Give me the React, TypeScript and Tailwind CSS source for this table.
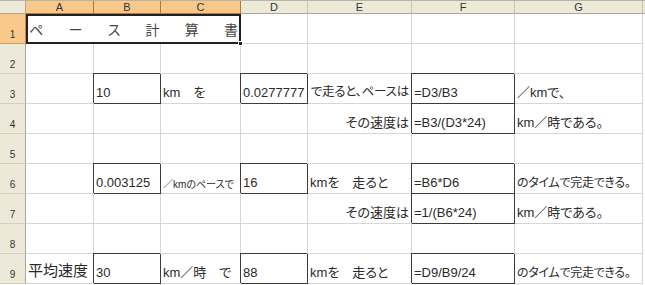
import React, { ReactElement } from "react";

interface CellData {
  text?: string;
  boxed?: boolean;
  align?: "left" | "right";
  size?: string;
}

const columns = ["A", "B", "C", "D", "E", "F", "G"];
const selectedColumns = ["A", "B", "C"];

const font =
  "font-['Liberation_Sans','Noto_Sans_CJK_JP',sans-serif] [font-feature-settings:'palt']";

// row number -> cells A..G
const sheet: Record<number, (CellData | null)[]> = {
  2: [null, null, null, null, null, null, null],
  3: [
    null,
    { text: "10", boxed: true },
    { text: "km　を" },
    { text: "0.0277777", boxed: true },
    { text: "で走ると、ペースは", align: "right", size: "text-[12.5px] tracking-[-0.2px]" },
    { text: "=D3/B3", boxed: true },
    { text: "／kmで、" },
  ],
  4: [
    null,
    null,
    null,
    null,
    { text: "その速度は", align: "right" },
    { text: "=B3/(D3*24)", boxed: true },
    { text: "km／時である。" },
  ],
  5: [null, null, null, null, null, null, null],
  6: [
    null,
    { text: "0.003125", boxed: true },
    { text: "／kmのペースで", size: "text-[10px]" },
    { text: "16", boxed: true },
    { text: "kmを　走ると" },
    { text: "=B6*D6", boxed: true },
    { text: "のタイムで完走できる。", size: "text-[12px] tracking-[-0.3px]" },
  ],
  7: [
    null,
    null,
    null,
    null,
    { text: "その速度は", align: "right" },
    { text: "=1/(B6*24)", boxed: true },
    { text: "km／時である。" },
  ],
  8: [null, null, null, null, null, null, null],
  9: [
    { text: "平均速度", size: "text-[15px]" },
    { text: "30", boxed: true },
    { text: "km／時　で" },
    { text: "88", boxed: true },
    { text: "kmを　走ると" },
    { text: "=D9/B9/24", boxed: true },
    { text: "のタイムで完走できる。", size: "text-[12px] tracking-[-0.3px]" },
  ],
};

function Cell({ cell }: { cell: CellData | null }): ReactElement {
  const boxed = cell?.boxed;
  return (
    <div
      className={`flex items-end overflow-hidden whitespace-nowrap px-[2px] pb-[1px] text-[#2a2a2a] ${
        cell?.align === "right" ? "justify-end" : "justify-start"
      } ${cell?.size ?? "text-[13px]"} ${
        boxed
          ? "border-r border-b border-[#3c3c3c] shadow-[-1px_-1px_0_#3c3c3c]"
          : "border-r border-b border-[#d6d6d6]"
      }`}
    >
      {cell?.text}
    </div>
  );
}

function RowHeader({ n, active }: { n: number; active?: boolean }): ReactElement {
  return (
    <div
      className={`flex items-end justify-center pb-[1px] text-[10px] text-[#333] border-r border-b ${
        active
          ? "bg-[#f9c98c] border-r-[#c48a44] border-b-[#d8a060]"
          : "bg-[#ece9d8] border-r-[#aca899] border-b-[#d4d0c0]"
      }`}
    >
      {n}
    </div>
  );
}

export default function App(): ReactElement {
  return (
    <div className={`w-[645px] h-[285px] overflow-hidden bg-white ${font}`}>
      <div className="h-[1px] bg-[#b8b4a4]" />
      <div className="grid grid-cols-[26px_68px_67px_80px_67px_104px_103px_128px_2px] grid-rows-[13px_repeat(9,30px)]">
        {/* column headers */}
        <div className="bg-[#ece9d8] border-r border-b border-[#aca899]" />
        {columns.map((c) => {
          const active = selectedColumns.includes(c);
          return (
            <div
              key={c}
              className={`flex items-center justify-center text-[11px] leading-none text-[#333] border-r border-b ${
                active
                  ? "bg-[#f9c98c] border-r-[#b07a38] border-b-[#b07a38]"
                  : "bg-[#ece9d8] border-r-[#c8c4b4] border-b-[#aca899]"
              }`}
            >
              {c}
            </div>
          );
        })}
        <div className="bg-[#ece9d8] border-b border-[#aca899]" />

        {/* row 1: merged title, selected */}
        <RowHeader n={1} active />
        <div className="relative col-span-3 flex items-end justify-between border-2 border-[#222] px-[1px] pb-[1px] text-[14px] text-[#444]">
          {["ペ", "ー", "ス", "計", "算", "書"].map((ch, i) => (
            <span key={i}>{ch}</span>
          ))}
          <span className="absolute -right-[4px] -bottom-[4px] h-[5px] w-[5px] bg-[#222] border border-white" />
        </div>
        <div className="border-r border-b border-[#d6d6d6]" />
        <div className="border-r border-b border-[#d6d6d6]" />
        <div className="border-r border-b border-[#d6d6d6]" />
        <div className="border-r border-b border-[#d6d6d6]" />
        <div />

        {/* rows 2..9 */}
        {[2, 3, 4, 5, 6, 7, 8, 9].map((r) => (
          <React.Fragment key={r}>
            <RowHeader n={r} />
            {sheet[r].map((cell, i) => (
              <Cell key={i} cell={cell} />
            ))}
            <div />
          </React.Fragment>
        ))}
      </div>
    </div>
  );
}
